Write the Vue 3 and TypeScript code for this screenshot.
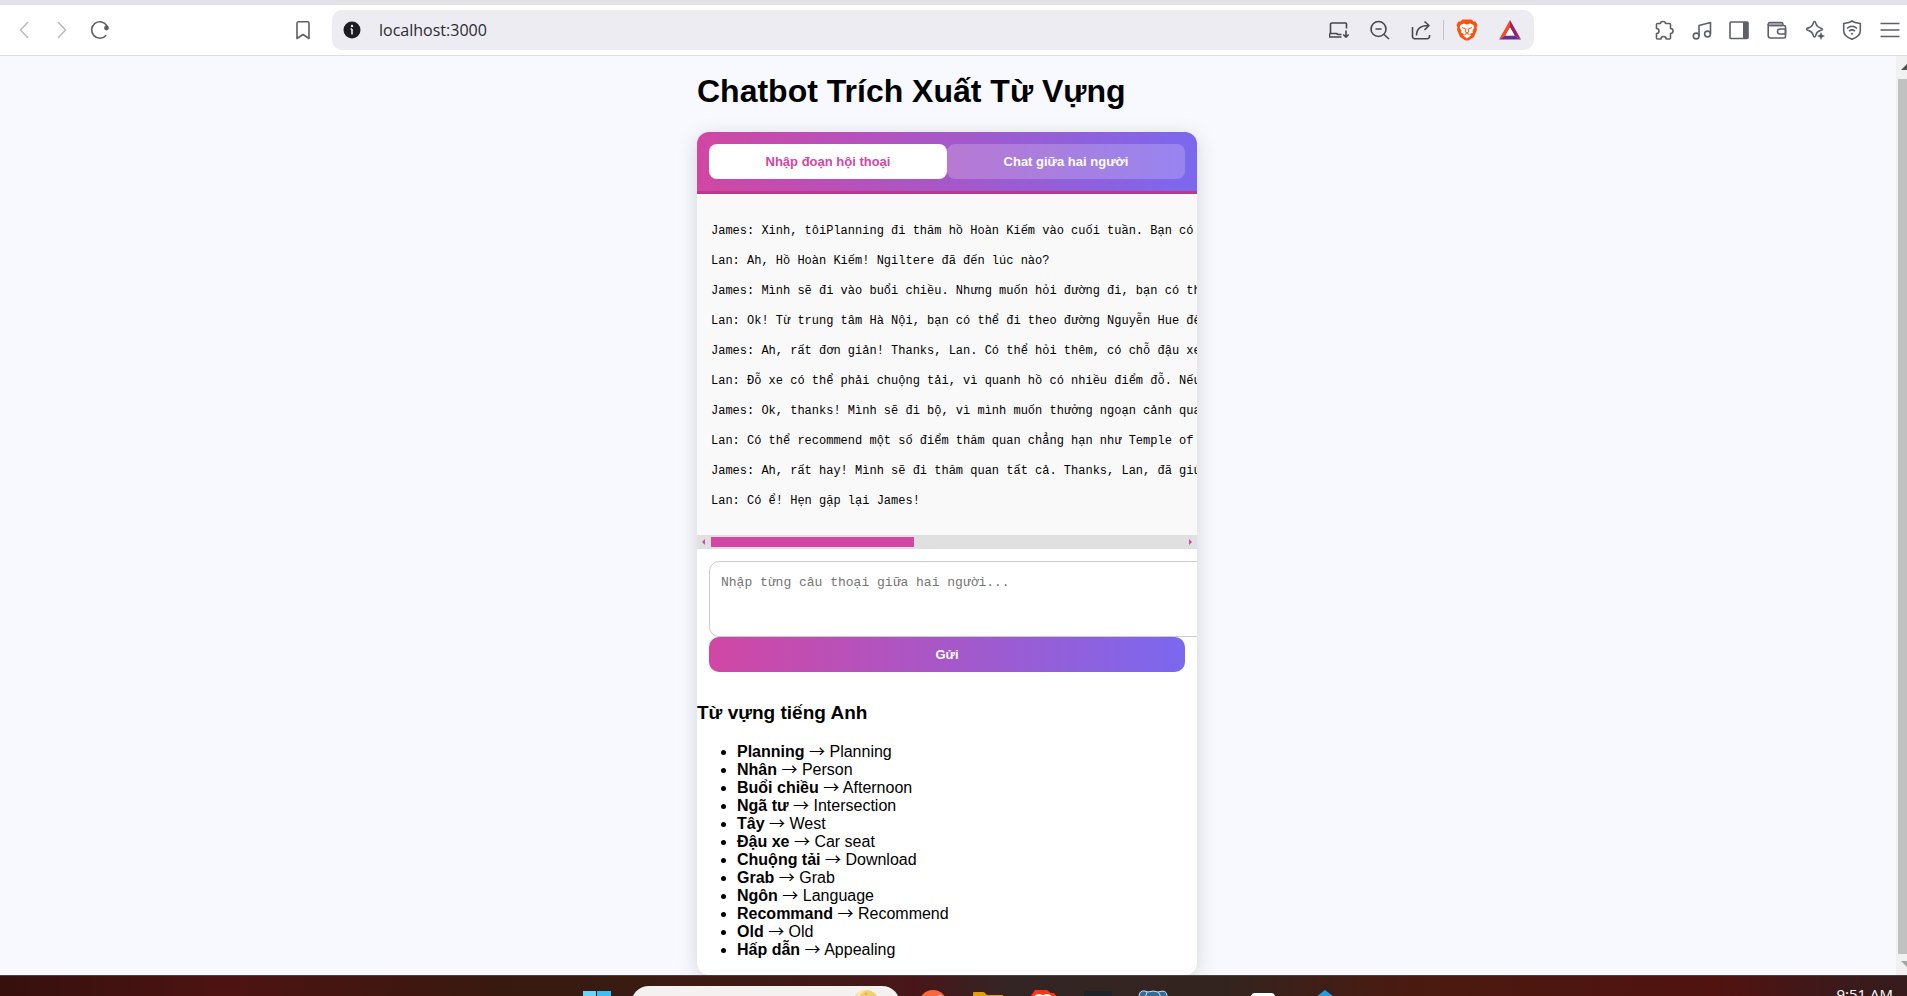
<script setup lang="ts">
import { ref } from 'vue'

type Mode = 'dialogue' | 'chat'

interface Word {
  term: string
  meaning: string
}

const mode = ref<Mode>('dialogue')
const draft = ref('')
const address = ref('localhost:3000')

const lines: string[] = [
  'James: Xinh, tôiPlanning đi thăm hồ Hoàn Kiếm vào cuối tuần. Bạn có',
  'Lan: Ah, Hồ Hoàn Kiếm! Ngiltere đã đến lúc nào?',
  'James: Mình sẽ đi vào buổi chiều. Nhưng muốn hỏi đường đi, bạn có th',
  'Lan: Ok! Từ trung tâm Hà Nội, bạn có thể đi theo đường Nguyễn Hue đế',
  'James: Ah, rất đơn giản! Thanks, Lan. Có thể hỏi thêm, có chỗ đậu xe',
  'Lan: Đỗ xe có thể phải chuộng tải, vì quanh hồ có nhiều điểm đỗ. Nếu',
  'James: Ok, thanks! Mình sẽ đi bộ, vì mình muốn thưởng ngoạn cảnh qua',
  'Lan: Có thể recommend một số điểm thăm quan chẳng hạn như Temple of',
  'James: Ah, rất hay! Mình sẽ đi thăm quan tất cả. Thanks, Lan, đã giú',
  'Lan: Có ể! Hẹn gặp lại James!',
]

const words: Word[] = [
  { term: 'Planning', meaning: 'Planning' },
  { term: 'Nhân', meaning: 'Person' },
  { term: 'Buổi chiều', meaning: 'Afternoon' },
  { term: 'Ngã tư', meaning: 'Intersection' },
  { term: 'Tây', meaning: 'West' },
  { term: 'Đậu xe', meaning: 'Car seat' },
  { term: 'Chuộng tải', meaning: 'Download' },
  { term: 'Grab', meaning: 'Grab' },
  { term: 'Ngôn', meaning: 'Language' },
  { term: 'Recommand', meaning: 'Recommend' },
  { term: 'Old', meaning: 'Old' },
  { term: 'Hấp dẫn', meaning: 'Appealing' },
]
</script>

<template>
  <div class="window">
    <header class="toolbar">
      <div class="left">
        <div class="nav">
          <button class="icon faded" aria-label="Back">
            <svg viewBox="0 0 20 20"><path d="M14 2 6.500 10 14 18" /></svg>
          </button>
          <button class="icon faded" aria-label="Forward">
            <svg viewBox="0 0 20 20"><path d="M6 2 13.500 10 6 18" /></svg>
          </button>
          <button class="icon" aria-label="Reload">
            <svg viewBox="0 0 20 20">
              <path d="M16.200 15.200A8.200 8.200 0 1 1 17 6" />
              <circle cx="16.500" cy="8" r="2.400" class="solid" />
            </svg>
          </button>
        </div>
        <button class="icon" aria-label="Bookmark">
          <svg viewBox="0 0 20 20"><path d="M5.500 1.800h9a1.500 1.500 0 0 1 1.500 1.500V18.500L10 14.500 4 18.500V3.300a1.500 1.500 0 0 1 1.500-1.500z" /></svg>
        </button>
      </div>

      <div class="address">
        <button class="icon info" aria-label="Site information">
          <svg viewBox="0 0 20 20">
            <circle cx="10" cy="10" r="8.500" fill="#1c1b20" stroke="none" />
            <path d="M10 9v5.500M8.500 9H10" stroke="#edecf2" />
            <circle cx="10" cy="6" r="1.200" fill="#edecf2" stroke="none" />
          </svg>
        </button>
        <input v-model="address" class="url" type="text" aria-label="Address" />
        <div class="actions">
          <button class="icon dark" aria-label="Install app">
            <svg viewBox="0 0 20 20">
              <path d="M1.500 14V4.500A1.500 1.500 0 0 1 3 3h13.500a1 1 0 0 1 1 1v4.500M.5 13.500h7l1.500 1h3.500M.5 13.500V17h12M17 10.500V17M14.300 14.500 17 17.200l2.700-2.700" />
            </svg>
          </button>
          <button class="icon dark" aria-label="Zoom out">
            <svg viewBox="0 0 20 20">
              <circle cx="8.500" cy="9" r="7.500" />
              <path d="M5.500 9h6M14 14.500 19 19" />
            </svg>
          </button>
          <button class="icon dark" aria-label="Share">
            <svg viewBox="0 0 20 20">
              <path d="M1.500 7v9.500A2.200 2.200 0 0 0 3.700 18.700h12.600a2.200 2.200 0 0 0 2.200-2.200V15M5.500 15.500C5.500 9 9 5.500 17.500 5.500M13.500 1.500l4.500 4-4.500 4.500" />
            </svg>
          </button>
          <span class="divider"></span>
          <button class="icon brand" aria-label="Brave Shields">
            <svg viewBox="0 0 22 22">
              <path d="M6.500.5h9L17.500 2.500h2L21.500 6l-1 2.500.5 2-3 7.500-5.500 3.500h-3L4 18 1 10.500l.5-2L.5 6l2-3.500h2z" fill="#fb5209" stroke="none" />
              <path d="M4.500 6 8 4.500l3 1 3-1L17.500 6l.8 2.500-1.800 3.500.5 1.500-3 1.500 1 1.500L11 19.500 7 16.500 8 15l-3-1.500.5-1.500-1.800-3.500z" fill="#fff" stroke="none" />
              <path d="m6 8.500 3.500 1.300M16 8.500l-3.500 1.300M10 9.500 9.300 13l1.700.8 1.700-.8-.7-3.500M8.500 15.500 11 14.500l2.500 1" stroke="#fb5209" stroke-width="1" />
            </svg>
          </button>
          <button class="icon brand" aria-label="Brave Rewards">
            <svg viewBox="0 0 22 22">
              <path d="M11 1 0 20.500 6.500 16.500 11 8.500z" fill="#ff4724" stroke="none" />
              <path d="M11 1v7.500l4.500 8 6.500 4z" fill="#9e1f63" stroke="none" />
              <path d="M0 20.500 6.500 16.500h9l6.500 4z" fill="#662d91" stroke="none" />
              <path d="m11 8.500 4.500 8h-9z" fill="#fff" stroke="none" />
            </svg>
          </button>
        </div>
      </div>

      <div class="tools">
        <button class="icon" aria-label="Extensions">
          <svg viewBox="0 0 20 20">
            <path d="M3.500 3.500h3C6.500 1.800 8 1.500 9 1.500s2.500.3 2.500 2h4a1 1 0 0 1 1 1v4c1.500 0 2.500 1 2.500 2.500S18 13.500 16.500 13.500V18a1 1 0 0 1-1 1h-3.300c0-1.800-1.200-2.500-2.700-2.500S7 17.200 7 19H3.500a1 1 0 0 1-1-1v-4.500C4 13.500 5 12.500 5 11S4 8.500 2.500 8.500v-4a1 1 0 0 1 1-1z" />
          </svg>
        </button>
        <button class="icon" aria-label="Media">
          <svg viewBox="0 0 20 20">
            <circle cx="4.200" cy="16" r="2.900" />
            <circle cx="15.500" cy="14" r="2.900" />
            <path d="M7 16V5.500L18.500 2.500V14" />
          </svg>
        </button>
        <button class="icon" aria-label="Sidebar">
          <svg viewBox="0 0 20 20">
            <rect x="1" y="2" width="18" height="16.500" rx="1" />
            <path d="M14 2h5v16.500h-5z" class="solid" />
          </svg>
        </button>
        <button class="icon" aria-label="Wallet">
          <svg viewBox="0 0 20 20">
            <path d="M1.200 4V15.500A2.500 2.500 0 0 0 3.700 18H17a1.500 1.500 0 0 0 1.500-1.500V7A1.500 1.500 0 0 0 17 5.500H3" />
            <path d="M1.200 4A1.500 1.500 0 0 1 2.700 2.500H14.500A1.500 1.500 0 0 1 16 4v1.500H3A1.500 1.500 0 0 1 1.200 4z" fill="#b5b6b9" stroke-width="1.300" />
            <path d="M18.500 9h-5.500a2.500 2.500 0 0 0 0 5h5.500z" />
          </svg>
        </button>
        <button class="icon" aria-label="Leo AI">
          <svg viewBox="0 0 20 20">
            <path d="M9.500 1.500c.9 0 1 .8 1.300 1.900.8 3 1.600 3.700 4.600 4.500 1.200.3 2 .5 2 1.300s-.8 1-2 1.300c-3 .8-3.800 1.600-4.600 4.600-.3 1.100-.4 1.900-1.300 1.900s-1-.8-1.300-1.900c-.8-3-1.600-3.800-4.600-4.600-1.200-.3-2-.5-2-1.300s.8-1 2-1.300c3-.8 3.800-1.500 4.600-4.500.3-1.100.4-1.900 1.300-1.900z" />
            <path d="M16 12l1.200 2.800 2.800 1.200-2.800 1.200L16 20l-1.200-2.800L12 16l2.800-1.200z" class="solid" />
          </svg>
        </button>
        <button class="icon" aria-label="VPN">
          <svg viewBox="0 0 20 20">
            <path d="M10 .8C12 2.500 15 3 18.300 3.500V11c0 4-3.500 6.500-8.300 8.300C5.200 17.500 1.700 15 1.700 11V3.500C5 3 8 2.500 10 .8z" />
            <path d="M5 8.500c3-2.800 7-2.800 10 0M7 11.200c2-1.700 4-1.700 6 0" />
            <circle cx="10" cy="13.700" r="1" class="solid" />
          </svg>
        </button>
        <button class="icon" aria-label="Menu">
          <svg viewBox="0 0 20 20"><path d="M.5 3.500h19M.5 10h19M.5 16.500h19" /></svg>
        </button>
      </div>
    </header>

    <div class="viewport">
      <main class="page">
        <div class="app">
          <h1>Chatbot Trích Xuất Từ Vựng</h1>
          <section class="card">
            <div class="tabs">
              <button class="tab" :class="{ active: mode === 'dialogue' }" @click="mode = 'dialogue'">Nhập đoạn hội thoại</button>
              <button class="tab" :class="{ active: mode === 'chat' }" @click="mode = 'chat'">Chat giữa hai người</button>
            </div>

            <div class="transcript">
              <p v-for="line in lines" :key="line">{{ line }}</p>
            </div>
            <div class="hscroll" aria-hidden="true">
              <svg class="arrow" viewBox="0 0 14 14"><path d="M8 4v6L5 7z" /></svg>
              <div class="track"><div class="thumb"></div></div>
              <svg class="arrow" viewBox="0 0 14 14"><path d="M6 4v6l3-3z" /></svg>
            </div>

            <form class="composer" @submit.prevent>
              <textarea v-model="draft" aria-label="Câu thoại" placeholder="Nhập từng câu thoại giữa hai người..."></textarea>
              <button class="send" type="submit">Gửi</button>
            </form>

            <h3>Từ vựng tiếng Anh</h3>
            <ul class="words">
              <li v-for="word in words" :key="word.term"><strong>{{ word.term }}</strong> <span class="to">→</span> {{ word.meaning }}</li>
            </ul>
          </section>
        </div>
      </main>
      <div class="vscroll" aria-hidden="true">
        <svg class="up" viewBox="0 0 11 23"><path d="M5 14h6V8z" /></svg>
        <div class="bar"></div>
        <svg class="down" viewBox="0 0 11 21"><path d="M5 7h6v6z" /></svg>
      </div>
    </div>

    <footer class="taskbar">
      <div class="dock">
        <svg class="app-icon" viewBox="0 0 30 30">
          <path d="M1 5h13v14H1z" fill="#6ad4fb" />
          <path d="M15 5h14v14H15z" fill="#3fbef5" />
        </svg>
        <div class="search">
          <svg class="moon" viewBox="0 0 28 28">
            <circle cx="14" cy="14" r="13" fill="#f2cf6b" />
            <path d="M3 8a13 13 0 0 1 12-7c-5 2-8 5-9 10z" fill="#fae9b0" />
            <circle cx="14" cy="5" r="1.500" fill="#e2b950" />
          </svg>
        </div>
        <svg class="app-icon" viewBox="0 0 30 30"><circle cx="15" cy="18" r="14" fill="#f9683c" /><circle cx="22" cy="10" r="1.500" fill="#ffd0b8" /></svg>
        <svg class="app-icon" viewBox="0 0 30 30"><path d="M0 7q0-1 1-1h9q1 0 2 1l2 2h16v15H0z" fill="#dfa006" /></svg>
        <svg class="app-icon" viewBox="0 0 30 30">
          <path d="m7 4 3 0 1 0h8l4 3h3l3 4-2 12H5L2 11l3-4z" fill="#ff3418" />
          <path d="M7 9l4-1 4 1 4-1 4 1v5H7z" fill="#fff" />
        </svg>
        <svg class="app-icon" viewBox="0 0 30 30"><path d="M1 8q0-3 4-3h20q4 0 4 3v15H1z" fill="#202327" /></svg>
        <svg class="app-icon" viewBox="0 0 30 30">
          <path d="M1 11q0-7 6-6l3 1q5-2 10 0 9-3 9 4v10H1z" fill="#336b98" stroke="#d5e0e8" />
          <path d="M9 6q-3 5 0 9M20 6q4 4 1 9" fill="none" stroke="#d5e0e8" />
        </svg>
        <span class="app-icon"></span>
        <svg class="app-icon" viewBox="0 0 30 30"><rect x="3" y="7" width="24" height="22" rx="4" fill="#fff" /></svg>
        <svg class="app-icon" viewBox="0 0 30 30"><path d="m13 11 9-7 8 6v12H15z" fill="#249be0" /></svg>
      </div>
      <time class="clock">9:51 AM</time>
    </footer>
  </div>
</template>

<style>
body {
  margin: 0;
}
</style>

<style scoped>
.window {
  display: flex;
  flex-direction: column;
  min-height: 100vh;
  font-family: "Liberation Sans", Arial, sans-serif;
  color: #000;
}

button,
input,
textarea {
  margin: 0;
  padding: 0;
  border: 0;
  outline: 0;
  background: none;
  color: inherit;
}

.toolbar {
  display: grid;
  grid-template-columns: 332px minmax(0, 1fr) 373px;
  align-items: center;
  padding: 5px 0;
  border-top: 5px solid #e3e2e8;
  border-bottom: 1px solid #dddde2;
  background: #fff;
}

.left,
.nav,
.address,
.actions,
.tools {
  display: flex;
  align-items: center;
}

.left {
  justify-content: space-between;
  padding: 0 19px 0 14px;
}

.nav {
  gap: 18px;
}

.icon {
  width: 20px;
  height: 20px;
  color: #5d6066;
}

.icon svg {
  display: block;
  width: 100%;
  height: 100%;
  fill: none;
  stroke: currentColor;
  stroke-width: 1.6;
  stroke-linejoin: round;
}

.icon .solid {
  fill: currentColor;
  stroke: none;
}

.faded {
  color: #babbbe;
}

.dark {
  color: #47464e;
}

.address {
  height: 40px;
  padding: 0 13px 0 10px;
  border-radius: 10px;
  background: #edecf2;
}

.address .icon {
  flex: none;
}

.url {
  flex: 1;
  min-width: 0;
  margin-left: 17px;
  font: 16px/24px "Open Sans", "Noto Sans", sans-serif;
  color: #2b2b30;
}

.actions {
  gap: 21px;
}

.divider {
  width: 1px;
  height: 20px;
  margin: 0 -9px;
  background: #c1c1c7;
}

.address .brand {
  width: 22px;
  height: 22px;
}

.tools {
  justify-content: space-between;
  padding: 0 7px 0 120px;
}

.viewport {
  display: flex;
  flex: 1;
  background: #f8f9ff;
}

.page {
  flex: 1;
  min-width: 0;
  padding-right: 2px;
}

.app {
  width: 100%;
  max-width: 500px;
  margin: 0 auto;
}

h1 {
  margin: 0;
  padding: 17px 0 23px;
  font-size: 32px;
  line-height: 36px;
}

.card {
  overflow: hidden;
  border-radius: 12px;
  background: #fff;
  box-shadow: 0 4px 20px rgba(0, 0, 0, 0.15);
}

.tabs {
  display: flex;
  padding: 12px;
  border-bottom: 3px solid #c2358a;
  background: linear-gradient(90deg, #d147a3, #7b68ee);
}

.tab,
.send {
  padding: 10px;
  font: bold 13px/15px "Liberation Sans", Arial, sans-serif;
  color: #fff;
}

.tab {
  flex: 1;
  border-radius: 8px;
  background: rgba(255, 255, 255, 0.2);
}

.tab.active {
  background: #fff;
  color: #d147a3;
}

.transcript {
  overflow: hidden;
  padding: 22px 0 19px 14px;
  background: #f9f9f9;
  font: 12px/30px "Liberation Mono", monospace;
  white-space: pre;
}

.transcript p {
  margin: 0;
}

.hscroll {
  display: flex;
  height: 14px;
  background: #e0e0e0;
  color: #d147a3;
}

.arrow {
  flex: none;
  width: 14px;
  height: 14px;
  fill: currentColor;
}

.track {
  flex: 1;
  padding: 2px 0;
}

.thumb {
  width: 43%;
  height: 10px;
  background: #d147a3;
}

.composer {
  padding: 12px;
}

textarea {
  display: block;
  box-sizing: content-box;
  width: 100%;
  height: 54px;
  padding: 10px 11px;
  overflow: hidden;
  border: 1px solid #ccc;
  border-radius: 10px;
  resize: none;
  font: 13px/22px "Liberation Mono", monospace;
}

textarea::placeholder {
  color: #757575;
}

.send {
  display: block;
  width: 100%;
  border-radius: 10px;
  background: linear-gradient(90deg, #d147a3, #7b68ee);
}

h3 {
  margin: 18px 0 19px;
  font-size: 19px;
  line-height: 22px;
}

.words {
  margin: 0;
  padding: 0 0 16px 40px;
  font-size: 16px;
  line-height: 18px;
}

.to {
  font-family: "Noto Sans CJK JP", sans-serif;
  line-height: 0;
}

.vscroll {
  display: flex;
  flex-direction: column;
  width: 11px;
  background: #f1f1f1;
}

.up {
  height: 23px;
  fill: #505050;
}

.down {
  height: 21px;
  fill: #a3a3a3;
}

.bar {
  flex: 1;
  margin-left: 2px;
  background: #c1c1c1;
}

.taskbar {
  display: grid;
  grid-template-columns: 1fr auto 1fr;
  box-sizing: border-box;
  height: 21px;
  padding-left: 8px;
  overflow: hidden;
  border-top: 1px solid #4a4242;
  background: linear-gradient(90deg, #35100d 0%, #4d1312 12%, #38190f 26%, #3a1b12 34%, #481619 48%, #332524 53%, #33241f 64%, #4a1a10 74%, #511210 90%, #3d191a 96%, #351c1d 100%);
}

.dock {
  display: flex;
  grid-column: 2;
  gap: 25px;
}

.app-icon {
  flex: none;
  width: 30px;
  height: 30px;
  margin-top: 10px;
}

.search {
  display: flex;
  justify-content: flex-end;
  box-sizing: border-box;
  width: 269px;
  height: 36px;
  margin: 10px -7px 0 -6px;
  padding: 3px 20px 0 0;
  border-radius: 18px;
  background: #f4f1f0;
}

.moon {
  width: 28px;
  height: 28px;
}

.clock {
  grid-column: 3;
  justify-self: end;
  padding: 8px 14px 0 0;
  font: 15px/20px "Open Sans", "Noto Sans", sans-serif;
  color: #fff;
}
</style>
